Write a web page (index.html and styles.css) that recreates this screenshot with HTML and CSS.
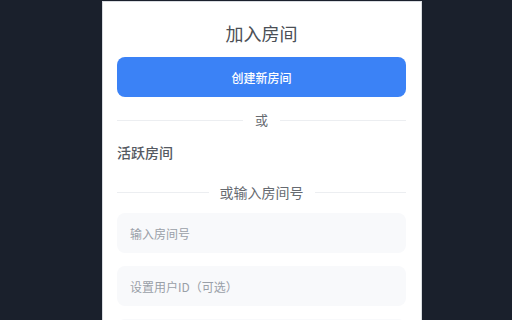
FILE: index.html
```html
<!DOCTYPE html>
<html lang="zh">
<head>
<meta charset="utf-8">
<link rel="stylesheet" href="styles.css">
</head>
<body>
<div class="panel">
  <h1 class="title">加入房间</h1>
  <button class="btn-primary">创建新房间</button>
  <div class="divider divider-or"><span>或</span></div>
  <div class="section-label">活跃房间</div>
  <div class="divider divider-input"><span>或输入房间号</span></div>
  <div class="field">输入房间号</div>
  <div class="field">设置用户ID（可选）</div>
  <div class="field"></div>
</div>
</body>
</html>
```
FILE: styles.css
```css
html, body {
  margin: 0;
  padding: 0;
  height: 100%;
  overflow: hidden;
}
body {
  background: #1a202c;
  font-family: "Noto Sans CJK SC", "Noto Sans", sans-serif;
}
.panel {
  box-sizing: border-box;
  width: 320px;
  margin: 1px 0 0 102px;
  min-height: 400px;
  background: #ffffff;
  border: 1px solid #d9dce1;
  padding: 19px 15px 0 14px;
  display: flex;
  flex-direction: column;
}
.title {
  margin: 0;
  font-size: 18px;
  line-height: 24px;
  font-weight: 400;
  color: #4b4f56;
  text-align: center;
}
.btn-primary {
  margin-top: 12px;
  height: 40px;
  border: none;
  border-radius: 8px;
  background: #3b82f6;
  color: #ffffff;
  font-family: inherit;
  font-size: 12px;
  font-weight: 500;
  padding: 0;
}
.divider {
  display: flex;
  align-items: center;
  color: #666a70;
  height: 20px;
  line-height: 20px;
}
.divider::before,
.divider::after {
  content: "";
  flex: 1;
  height: 1px;
  background: #eceef1;
}
.divider-or {
  margin-top: 13px;
  font-size: 13px;
}
.divider-or span {
  padding: 0 12px;
}
.section-label {
  margin-top: 12px;
  font-size: 14px;
  line-height: 20px;
  color: #555a62;
  font-weight: 500;
}
.divider-input {
  margin-top: 20px;
  font-size: 14px;
}
.divider-input span {
  padding: 0 11px;
}
.field {
  margin-top: 13px;
  height: 40px;
  border-radius: 8px;
  background: #f8f9fb;
  box-sizing: border-box;
  padding-left: 13px;
  display: flex;
  align-items: center;
  font-size: 12px;
  color: #9aa0a8;
}
.divider-input + .field {
  margin-top: 11px;
}
```
